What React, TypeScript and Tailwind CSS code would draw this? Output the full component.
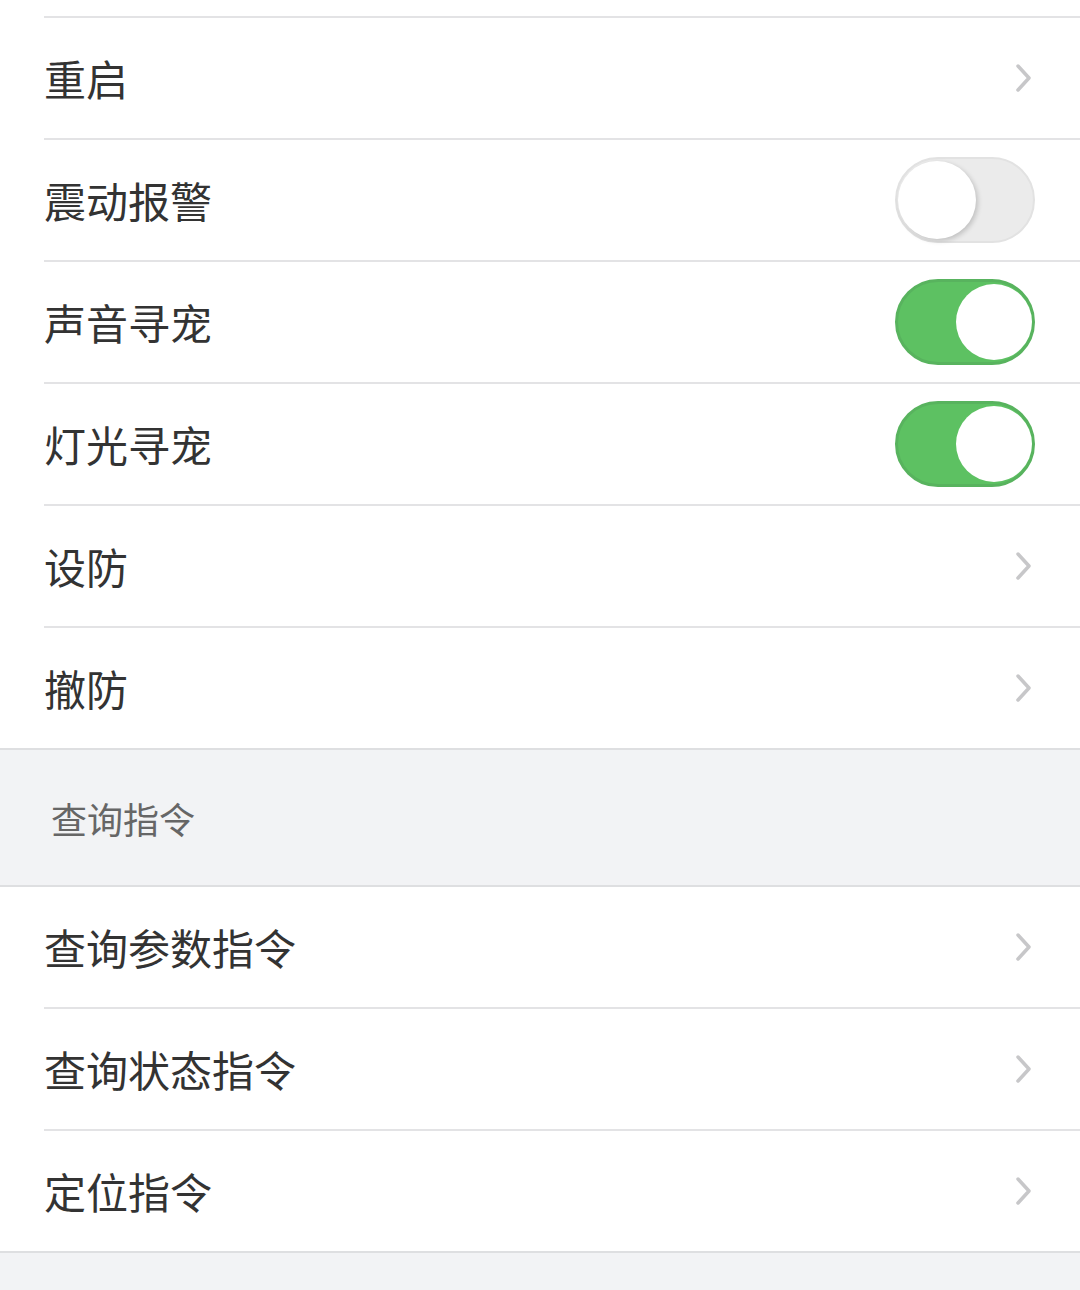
import React from 'react';

type Row = { label: string; kind: 'link' | 'on' | 'off' };

const controlRows: Row[] = [
  { label: '重启', kind: 'link' },
  { label: '震动报警', kind: 'off' },
  { label: '声音寻宠', kind: 'on' },
  { label: '灯光寻宠', kind: 'on' },
  { label: '设防', kind: 'link' },
  { label: '撤防', kind: 'link' },
];

const queryRows: Row[] = [
  { label: '查询参数指令', kind: 'link' },
  { label: '查询状态指令', kind: 'link' },
  { label: '定位指令', kind: 'link' },
];

const Chevron = () => (
  <svg width="20" height="32" viewBox="0 0 20 32" className="mr-[46px]">
    <path d="M4 4 L15 16 L4 28" fill="none" stroke="#c7c7c9" strokeWidth="3.5" strokeLinecap="round" strokeLinejoin="round" />
  </svg>
);

const Toggle = ({ on }: { on: boolean }) =>
  on ? (
    <div className="mr-[45px] flex h-[86px] w-[140px] items-center justify-end rounded-full border-[3px] border-[#58b35e] bg-[#5dc162]">
      <div className="h-[76px] w-[76px] rounded-full bg-white" />
    </div>
  ) : (
    <div className="mr-[45px] flex h-[86px] w-[140px] items-center rounded-full border-2 border-[#e2e2e2] bg-[#ebebeb]">
      <div className="ml-px h-[78px] w-[78px] rounded-full bg-white shadow-[2px_2px_5px_rgba(0,0,0,0.18)]" />
    </div>
  );

const SettingRow = ({ row, first }: { row: Row; first?: boolean }) => (
  <div className="pl-[44px]">
    <div
      className={`flex items-center justify-between ${
        first ? 'h-[120px]' : 'h-[122px] border-t-2 border-[#e3e3e5]'
      }`}
    >
      <span className="text-[42px] leading-none text-[#333333]">{row.label}</span>
      {row.kind === 'link' ? <Chevron /> : <Toggle on={row.kind === 'on'} />}
    </div>
  </div>
);

export default function App() {
  return (
    <div
      className="h-[1290px] w-[1080px] overflow-hidden bg-[#f2f3f5]"
      style={{ fontFamily: '"Noto Sans CJK SC", "Noto Sans", sans-serif' }}
    >
      <div className="border-b-2 border-[#dedfe1] bg-white">
        <div className="h-[16px]" />
        <div className="pl-[44px]">
          <div className="border-t-2 border-[#e3e3e5]" />
        </div>
        {controlRows.map((row, i) => (
          <SettingRow key={row.label} row={row} first={i === 0} />
        ))}
      </div>

      <div className="flex h-[135px] items-center pl-[51px]">
        <span className="text-[36px] leading-none text-[#666666]">查询指令</span>
      </div>

      <div className="border-y-2 border-[#dedfe1] bg-white">
        {queryRows.map((row, i) => (
          <SettingRow key={row.label} row={row} first={i === 0} />
        ))}
      </div>
    </div>
  );
}
